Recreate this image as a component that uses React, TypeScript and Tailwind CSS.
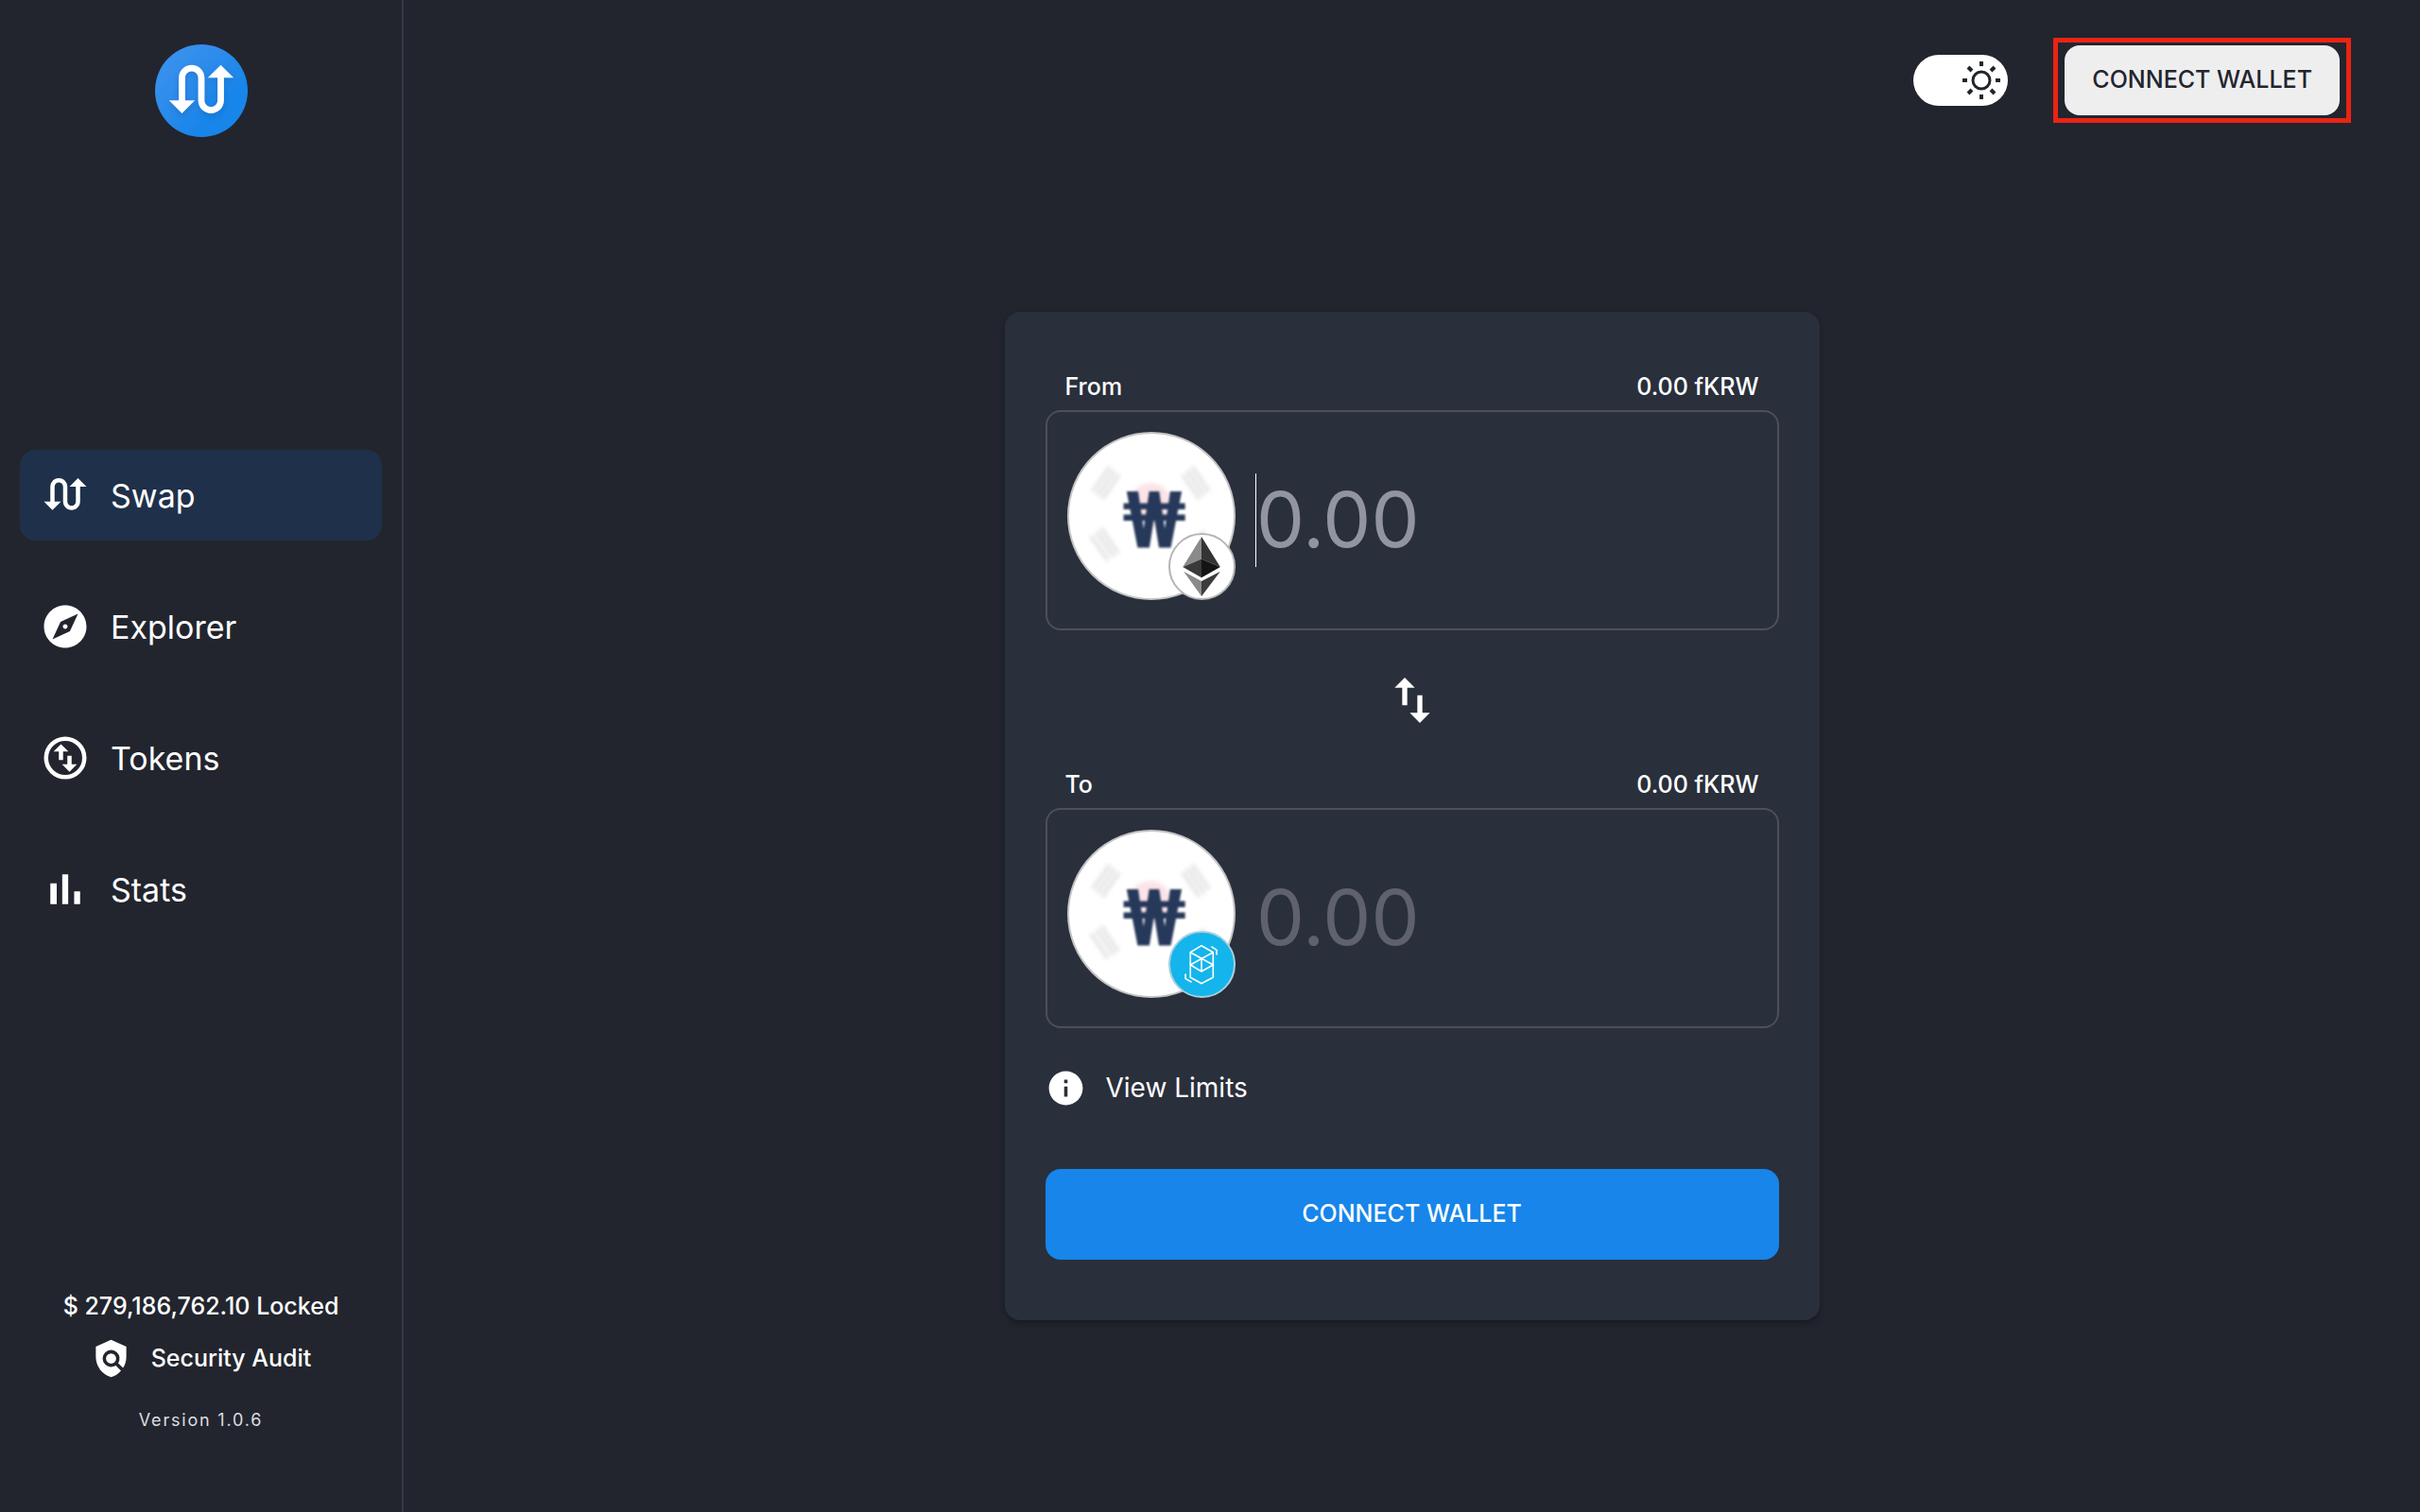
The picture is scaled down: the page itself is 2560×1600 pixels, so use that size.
import { useState } from "react";
import {
  MdExplore,
  MdInfo,
  MdPolicy,
  MdSwapCalls,
  MdSwapVert,
} from "react-icons/md";

interface NavItem {
  label: string;
  icon: React.ReactNode;
}

const NAV_ITEMS: NavItem[] = [
  { label: "Swap", icon: <MdSwapCalls className="size-[54px]" /> },
  { label: "Explorer", icon: <MdExplore className="size-[54px]" /> },
  { label: "Tokens", icon: <TokensIcon /> },
  { label: "Stats", icon: <StatsIcon /> },
];

function TokensIcon() {
  return (
    <svg viewBox="0 0 24 24" className="size-[54px]" fill="currentColor">
      <circle cx="12" cy="12" r="9" fill="none" stroke="currentColor" strokeWidth="2" />
      <path d="M6.5 9 10 5.5 13.5 9H11v4H9V9z" />
      <path d="M17.5 15 14 18.5 10.5 15H13v-4h2v4z" />
    </svg>
  );
}

function StatsIcon() {
  return (
    <svg viewBox="0 0 24 24" className="size-[54px]" fill="currentColor">
      <path d="M5 9.200h3V19H5zM10.600 5h2.800v14h-2.800zM16.200 13H19v6h-2.800z" />
    </svg>
  );
}

function SunIcon() {
  return (
    <svg viewBox="0 0 40 40" className="size-10" fill="none" stroke="#22252e">
      <circle cx="20" cy="20" r="9" strokeWidth="3" />
      <path
        strokeWidth="4"
        d="M20 0v5M20 35v5M0 20h5M35 20h5M6 6l4 4M30 30l4 4M34 6l-4 4M10 30l-4 4"
      />
    </svg>
  );
}

function EthereumIcon() {
  return (
    <svg viewBox="0 0 71 71" className="size-full">
      <path d="M35 2 14 36l21-9z" fill="#8a8a8a" />
      <path d="M35 2v25l21 9z" fill="#343434" />
      <path d="M14 36l21-9v21z" fill="#393939" />
      <path d="M56 36l-21-9v21z" fill="#141414" />
      <path d="M15 41l20 11v17z" fill="#8a8a8a" />
      <path d="M56 41 35 52v17z" fill="#3c3c3b" />
    </svg>
  );
}

function FantomIcon() {
  return (
    <svg
      viewBox="0 0 71 71"
      className="size-full"
      fill="none"
      stroke="#fff"
      strokeWidth="1.7"
      strokeLinejoin="round"
    >
      <path d="M35 14.500 48 22v28l-13 7-12.500-7V22z" />
      <path d="M22.500 22 48 36 35 43.500 22.500 36 48 22M35 29v14" />
      <path d="M46 15.500l6 4V25M17 46v5.500l7 4" />
    </svg>
  );
}

// Moeda do won com o selo da rede
function TokenCoin({ network }: { network: "ethereum" | "fantom" }) {
  return (
    <div className="relative size-[178px] shrink-0 rounded-full border-2 border-[#c4c4c4] bg-white">
      <svg viewBox="0 0 174 174" className="size-full">
        <g className="blur-[2px]">
          <circle cx="86" cy="74" r="22" fill="#fbe3e7" />
          <g stroke="#e4e4e4" strokeWidth="4">
            <path d="M25 61 43 35M30 65 48 39M35 69 53 43" />
            <path d="M148 61 130 35M143 65 125 39M138 69 120 43" />
            <path d="M23 108 41 134M29 104 47 130M34 100 52 127" />
            <path d="M143 103 134 115" />
          </g>
        </g>
        <text
          x="90"
          y="120"
          textAnchor="middle"
          className="fill-[#26395a] font-[Roboto] text-[84px] font-bold blur-[1px]"
        >
          ₩
        </text>
      </svg>
      {network === "ethereum" ? (
        <span className="absolute -right-0.5 -bottom-0.5 size-[71px] rounded-full border-2 border-[#b5b5b5] bg-white">
          <EthereumIcon />
        </span>
      ) : (
        <span className="absolute -right-0.5 -bottom-0.5 size-[71px] rounded-full border-2 border-[#a9cfdc] bg-[#13b5ec]">
          <FantomIcon />
        </span>
      )}
    </div>
  );
}

interface AmountFieldProps {
  id: string;
  label: string;
  network: "ethereum" | "fantom";
  active?: boolean;
}

function AmountField({ id, label, network, active }: AmountFieldProps) {
  const [value, setValue] = useState("");

  return (
    <div>
      <div className="mb-2.5 flex justify-between px-[21px] text-[25px] leading-[30px] font-medium">
        <label htmlFor={id}>{label}</label>
        <span>0.00 fKRW</span>
      </div>
      <div className="flex h-[233px] items-center rounded-2xl border-2 border-[#4b505b] pl-[21px]">
        <div className="mb-2.5 flex">
          <TokenCoin network={network} />
        </div>
        <span className={active ? "ml-[21px] h-[99px] w-0.5 bg-white" : "ml-[21px] h-[99px] w-0.5"} />
        <input
          id={id}
          type="text"
          value={value}
          onChange={(e) => setValue(e.target.value)}
          disabled={!active}
          placeholder="0.00"
          className={
            active
              ? "h-[100px] w-full min-w-0 bg-transparent text-[81px] outline-none placeholder:text-[#9295a0]"
              : "h-[100px] w-full min-w-0 bg-transparent text-[81px] outline-none placeholder:text-[#5f626e]"
          }
        />
      </div>
    </div>
  );
}

function Sidebar() {
  return (
    <aside className="flex w-[427px] shrink-0 flex-col items-center border-r-2 border-[#363943] px-[21px] pt-[47px] pb-[85px]">
      <div className="flex size-[98px] items-center justify-center rounded-full bg-linear-to-br from-[#3f94ee] to-[#1785ea] to-70%">
        <MdSwapCalls className="size-[82px] drop-shadow-md" />
      </div>

      <nav className="mt-[331px] flex w-full flex-col gap-[43px]">
        {NAV_ITEMS.map((item, index) => (
          <a
            key={item.label}
            href="#"
            className={
              index === 0
                ? "flex h-24 items-center gap-[21px] rounded-2xl bg-[#1f304a] pl-[21px] text-[34px]"
                : "flex h-24 items-center gap-[21px] rounded-2xl pl-[21px] text-[34px]"
            }
          >
            {item.icon}
            {item.label}
          </a>
        ))}
      </nav>

      <div className="mt-auto flex flex-col items-center">
        <p className="text-[25px] leading-8 font-medium">$ 279,186,762.10 Locked</p>
        <a href="#" className="mt-[18px] flex items-center gap-[21px] text-[25px] font-medium">
          <MdPolicy className="size-[43px]" />
          Security Audit
        </a>
        <p className="mt-8 text-lg leading-6 tracking-widest text-[#dcdde0]">Version 1.0.6</p>
      </div>
    </aside>
  );
}

export default function App() {
  return (
    <div className="flex min-h-screen bg-[#22252e] font-[Inter,sans-serif] text-white">
      <Sidebar />

      <div className="flex flex-1 flex-col">
        <header className="flex items-center justify-end gap-12 pt-10 pr-[73px]">
          <button
            type="button"
            aria-label="Toggle theme"
            className="flex h-[54px] w-[100px] items-center justify-end rounded-full bg-white pr-2"
          >
            <SunIcon />
          </button>
          <div className="border-5 border-[#ea2414] px-[7px] py-[3px]">
            <button
              type="button"
              className="h-[74px] rounded-2xl bg-[#eeeeee] px-[29px] text-[25px] font-medium text-[#22252e]"
            >
              CONNECT WALLET
            </button>
          </div>
        </header>

        <main className="flex flex-1 items-center justify-center pb-[3px]">
          <section className="w-[862px] rounded-2xl bg-[#292f3b] px-[43px] py-16 shadow-[0_3px_6px_rgba(0,0,0,0.3)]">
            <AmountField id="from" label="From" network="ethereum" active />

            <button
              type="button"
              aria-label="Switch direction"
              className="mx-auto my-[42px] block"
            >
              <MdSwapVert className="size-16" />
            </button>

            <AmountField id="to" label="To" network="fantom" />

            <button
              type="button"
              className="mt-[42px] flex items-center gap-[21px] text-[28px] leading-[43px]"
            >
              <MdInfo className="size-[43px]" />
              View Limits
            </button>

            <button
              type="button"
              className="mt-16 h-24 w-full rounded-2xl bg-[#1785ea] text-[25px] font-medium"
            >
              CONNECT WALLET
            </button>
          </section>
        </main>
      </div>
    </div>
  );
}
